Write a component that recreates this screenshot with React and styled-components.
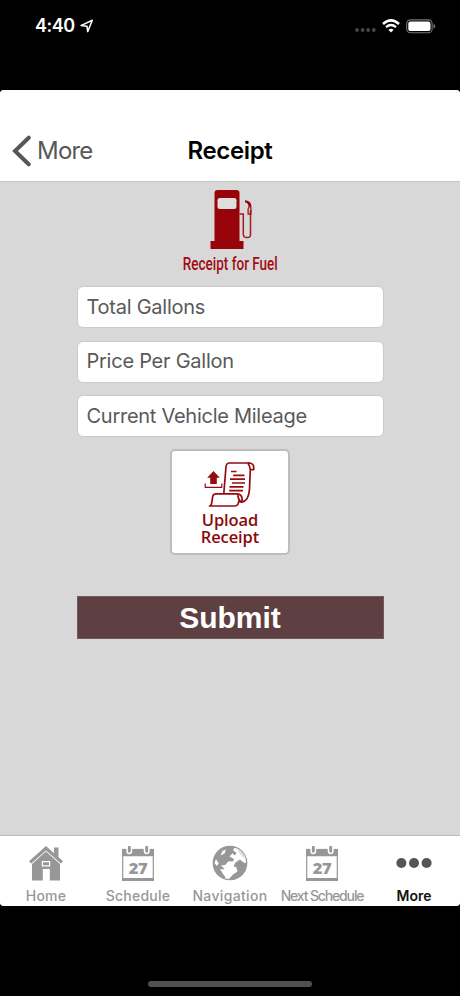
import { useState } from 'react';
import styled, { createGlobalStyle } from 'styled-components';

const GlobalStyle = createGlobalStyle`
    * {
        box-sizing: border-box;
    }
    body {
        margin: 0;
        background: #000;
        font-family: Inter, "Liberation Sans", sans-serif;
    }
`

const Phone = styled.div`
    display: flex;
    flex-direction: column;
    width: 460px;
    height: 996px;
    background: #000;
    overflow: hidden;
`

const StatusBar = styled.header`
    display: flex;
    justify-content: space-between;
    align-items: flex-start;
    height: 90px;
    padding: 15px 24px 0 35px;
    color: #fff;
`

const StatusGroup = styled.div`
    display: flex;
    align-items: center;
    height: 22px;
    gap: ${({ $gap }) => $gap}px;
`

const Time = styled.span`
    font-size: 18px;
    font-weight: 600;
    line-height: 22px;
    letter-spacing: -0.45px;
`

const Screen = styled.main`
    display: flex;
    flex-direction: column;
    height: 816px;
    background: #d8d8d8;
    border-radius: 4px;
    overflow: hidden;
`

const NavBar = styled.nav`
    display: grid;
    grid-template-columns: 1fr auto 1fr;
    align-items: center;
    height: 92px;
    padding: 30px 12px 0;
    background: #fff;
    border-bottom: 1px solid #c4c4c4;
`

const BackButton = styled.button`
    display: flex;
    align-items: center;
    gap: 6px;
    padding: 0;
    border: none;
    background: none;
    color: #575757;
    font-family: inherit;
    font-size: 24px;
    line-height: 30px;
    letter-spacing: -0.8px;
`

const Title = styled.h1`
    margin: 0;
    font-size: 24px;
    font-weight: 600;
    line-height: 30px;
    letter-spacing: -0.35px;
`

const Content = styled.form`
    flex: 1;
    display: flex;
    flex-direction: column;
    align-items: center;
    padding-top: 8px;
`

const FuelCaption = styled.h2`
    height: 20px;
    margin: 4px 0 12px;
    color: #a00d12;
    font-family: Roboto, sans-serif;
    font-size: 18px;
    font-weight: 500;
    line-height: 20px;
    white-space: nowrap;
    transform: scaleX(0.75);
`

const Fields = styled.div`
    display: flex;
    flex-direction: column;
    gap: 12.5px;
    width: 307px;
`

const Field = styled.input`
    width: 100%;
    height: 42px;
    padding: 0 9px 1px;
    border: 1px solid #cacaca;
    border-radius: 6px;
    background: #fff;
    outline: none;
    font-family: inherit;
    font-size: 20px;
    letter-spacing: ${({ $spacing }) => $spacing}px;

    &::placeholder {
        color: #595959;
        opacity: 1;
    }
`

const UploadButton = styled.button`
    display: flex;
    flex-direction: column;
    align-items: center;
    width: 120px;
    height: 106px;
    margin-top: 12px;
    padding: 11px 0 0;
    border: 2px solid #bdbdbd;
    border-radius: 5px;
    background: #fff;
    color: #8c080c;
`

const UploadLabel = styled.span`
    font-family: "Open Sans", "Noto Sans", sans-serif;
    font-size: 16.5px;
    font-weight: 600;
    line-height: 17px;
    letter-spacing: -0.1px;
    text-align: center;
`

const SubmitButton = styled.button`
    width: 307px;
    height: 43px;
    margin-top: 41px;
    padding: 0;
    border: 1px solid #73595b;
    background: #5f4042;
    color: #fff;
    font-family: "Liberation Sans", Arial, sans-serif;
    font-size: 30px;
    font-weight: 700;
    line-height: 40px;
`

const TabBar = styled.nav`
    display: grid;
    grid-template-columns: repeat(5, 1fr);
    height: 71px;
    background: #fff;
    border-top: 1px solid #bcbcbc;
`

const Tab = styled.button`
    display: flex;
    flex-direction: column;
    align-items: center;
    min-width: 0;
    padding: 9px 0 0;
    border: none;
    background: none;
    color: ${({ $active }) => ($active ? '#111' : '#979797')};
    font-family: inherit;
    font-size: 14px;
    font-weight: ${({ $active }) => ($active ? 600 : 500)};
    line-height: 18px;
    letter-spacing: ${({ $spacing }) => $spacing}px;
    white-space: nowrap;
`

const TabIcon = styled.span`
    display: flex;
    align-items: center;
    height: 36px;
    margin-bottom: 6px;
`

const HomeArea = styled.footer`
    flex: 1;
    display: flex;
    justify-content: center;
    align-items: flex-end;
    padding-bottom: 9px;
`

const HomeIndicator = styled.div`
    width: 164px;
    height: 6px;
    border-radius: 3px;
    background: #505050;
`

const LocationIcon = () => (
    <svg width="14" height="14" viewBox="0 0 14 14">
        <path d="M1 6.6 12.3 1.2 7.7 12.6 7 7.2Z" fill="none" stroke="#fff" strokeWidth="1.5" strokeLinejoin="round" />
    </svg>
)

const SignalDots = () => (
    <svg width="22" height="22" viewBox="0 0 22 22" fill="#464646">
        {[3, 8.6, 14.2, 19.8].map(x => (
            <circle key={x} cx={x} cy="15" r="1.9" />
        ))}
    </svg>
)

const WifiIcon = () => (
    <svg width="18" height="14" viewBox="0 0 18 14" fill="none" stroke="#fff">
        <path d="M1 4.9Q9-2.1 17 4.9" strokeWidth="2.6" />
        <path d="M4 8.2Q9 4 14 8.2" strokeWidth="2.4" />
        <path d="M6.4 10.8Q9 8.7 11.6 10.8L9 13.5Z" fill="#fff" stroke="none" />
    </svg>
)

const BatteryIcon = () => (
    <svg width="30" height="15" viewBox="0 0 30 15">
        <rect x="0.7" y="0.9" width="25.4" height="12.8" rx="3.8" fill="none" stroke="#777" strokeWidth="1.1" />
        <rect x="2.3" y="2.5" width="22.2" height="9.6" rx="2.2" fill="#fff" />
        <path d="M27.5 5Q29.2 5.5 29.2 7.3T27.5 9.6Z" fill="#777" />
    </svg>
)

const BackIcon = () => (
    <svg width="19" height="32" viewBox="0 0 19 32">
        <path d="M16.7 2.7 3 16 16.7 29.3" fill="none" stroke="#575757" strokeWidth="4" strokeLinecap="round" />
    </svg>
)

const FuelPumpIcon = () => (
    <svg width="44" height="60" viewBox="-2.5 0 44 60">
        <path d="M7 0H26Q29 0 29 3V51H33V59H0V51H4V3Q4 0 7 0Z" fill="#960308" />
        <rect x="7" y="8" width="19" height="11" rx="2.3" fill="#dedede" />
        <path d="M29 24H32.8V44Q32.8 47.6 36.5 47.6T40 44V20" fill="none" stroke="#a51a1e" strokeWidth="1.5" />
        <path d="M35.2 11.5 38.8 13Q40.5 15.2 40.5 20V24H37.6V19L39 16" fill="none" stroke="#a51a1e" strokeWidth="1.3" />
        <path d="M34.5 10.3Q40 10.7 40.8 15.5L38.4 17.3Q37.8 13 34.5 12.3Z" fill="#960308" />
    </svg>
)

const UploadIcon = () => (
    <svg width="52" height="49" viewBox="0 0 52 49" fill="none" stroke="#960b10" strokeWidth="1.7" strokeLinejoin="round">
        <path d="M9.5 9 15.8 15.7H12.8V22H6.2V15.7H3.2Z" fill="#960b10" stroke="none" />
        <path d="M1.2 21.5V25.3H17.8V21.5" strokeWidth="1.2" />
        <path d="M46 1H25Q22.2 1.2 21.9 5.7L19.8 31.7" />
        <path d="M44.5 1Q50.5 0.7 49.7 7.7H46.3Q45.8 3.2 43.8 1.2M46.3 7.7 45.5 27.2Q44.7 39.2 37.5 40.2" />
        <path d="M34 31.8H12Q8.3 32.2 8.5 36.2L8 39.2Q7.5 44 5.5 44H31.5Q34.5 43.2 34.7 39.2L37.5 40.2Q33.5 37.7 34 31.8Z" />
        <path d="M34.7 32.2Q38.8 33.2 38 40.2" />
        <path d="M27 9.5H32.5M29.2 13.3H40.5M26 17.2H41M28 21H41M25.5 24.9H39.5M25.2 28.6H39" strokeWidth="1.7" />
    </svg>
)

const HouseIcon = () => (
    <svg width="34" height="35" viewBox="0 0 34 35" fill="#979797">
        <path d="M25 1.5H29.5V12L25 8Z" />
        <path d="M17 0 34 15.3 31.8 17.6 17 4.5 2.2 17.6 0 15.3Z" />
        <path d="M17 5.6 31 18V34.5H20.8V23H13.8V34.5H3V18Z" />
        <path d="M12.8 15H21.2V20.6H12.8Z" fill="#fff" />
        <path d="M14 16.2H20V19.3H14Z" />
    </svg>
)

const CalendarIcon = () => (
    <svg width="32" height="35" viewBox="0 0 32 35">
        <rect x="0.7" y="3.5" width="30.6" height="30.8" fill="#fff" stroke="#979797" strokeWidth="1.2" />
        <path d="M0 3H32V10.3H0ZM0 32H32V35H0Z" fill="#979797" />
        {[7.3, 24.7].map(x => (
            <rect key={x} x={x - 2.2} y="-1" width="4.4" height="8.5" rx="2.2" fill="#979797" stroke="#fff" strokeWidth="1.5" />
        ))}
        <text x="16" y="27.6" textAnchor="middle" fill="#979797" fontFamily="Open Sans" fontSize="16.5" fontWeight="800" letterSpacing="-0.5">27</text>
    </svg>
)

const GlobeIcon = () => (
    <svg width="36" height="36" viewBox="0 0 36 36">
        <circle cx="18" cy="18" r="16.7" fill="#fff" stroke="#979797" strokeWidth="1.3" />
        <g fill="#979797">
            <path d="M12 2.5Q17 0 23 2.2L21 5 24.5 8 23 10.5 20.5 8.3 17.5 11.5 22 14 21 16.5 16.5 16.3 13.2 20 9 20.5 12.5 24 9.5 26.5 13.5 31.5 12 34Q2 29.7 1 19 1 9 12 2.5Z" />
            <path d="M8 24 12.5 24.5 20.5 25.5 24 28 18 34 12.5 31Z" fill="#fff" />
            <path d="M23.5 17.5 28 14.5 31.5 17.5 34.5 18Q34 27.5 27 32.5 22 35.5 16.5 34.5L21 29.5 25.5 26.5 24.2 22 21.5 21.5Z" />
            <path d="M25 3.2Q31.5 6.5 34 13L31 12.5 27 7.5Z" fill="#dedede" />
            <path d="M10.5 6 14 4.5 12.5 8.5 8.5 10.5ZM4 14 6.8 18.5 4.8 21 2.5 18Z" fill="#fff" />
        </g>
    </svg>
)

const DotsIcon = () => (
    <svg width="36" height="12" viewBox="0 0 36 12" fill="#555">
        {[5.4, 18, 30.6].map(x => (
            <circle key={x} cx={x} cy="6" r="5" />
        ))}
    </svg>
)

const fields = [
    { name: 'gallons', label: 'Total Gallons', spacing: -0.25 },
    { name: 'price', label: 'Price Per Gallon', spacing: -0.25 },
    { name: 'mileage', label: 'Current Vehicle Mileage', spacing: -0.27 }
]

const tabs = [
    { label: 'Home', icon: <HouseIcon />, spacing: 0.2 },
    { label: 'Schedule', icon: <CalendarIcon />, spacing: 0.25 },
    { label: 'Navigation', icon: <GlobeIcon />, spacing: 0.35 },
    { label: 'Next Schedule', icon: <CalendarIcon />, spacing: -1.15 },
    { label: 'More', icon: <DotsIcon />, spacing: 0 }
]

const App = () => {
    const [formData, setFormData] = useState({ gallons: '', price: '', mileage: '' })
    const [activeTab, setActiveTab] = useState('More')

    const handleChange = (e) => {
        setFormData({ ...formData, [e.target.name]: e.target.value })
    }

    return (
        <Phone>
            <GlobalStyle />
            <StatusBar>
                <StatusGroup $gap={5}>
                    <Time>4:40</Time>
                    <LocationIcon />
                </StatusGroup>
                <StatusGroup $gap={6}>
                    <SignalDots />
                    <WifiIcon />
                    <BatteryIcon />
                </StatusGroup>
            </StatusBar>
            <Screen>
                <NavBar>
                    <BackButton type="button">
                        <BackIcon />
                        More
                    </BackButton>
                    <Title>Receipt</Title>
                </NavBar>
                <Content onSubmit={(e) => e.preventDefault()}>
                    <FuelPumpIcon />
                    <FuelCaption>Receipt for Fuel</FuelCaption>
                    <Fields>
                        {fields.map(field => (
                            <Field
                                key={field.name}
                                name={field.name}
                                placeholder={field.label}
                                value={formData[field.name]}
                                onChange={handleChange}
                                $spacing={field.spacing}
                            />
                        ))}
                    </Fields>
                    <UploadButton type="button">
                        <UploadIcon />
                        <UploadLabel>Upload<br />Receipt</UploadLabel>
                    </UploadButton>
                    <SubmitButton type="submit">Submit</SubmitButton>
                </Content>
                <TabBar>
                    {tabs.map(tab => (
                        <Tab
                            key={tab.label}
                            type="button"
                            $active={tab.label === activeTab}
                            $spacing={tab.spacing}
                            onClick={() => setActiveTab(tab.label)}
                        >
                            <TabIcon>{tab.icon}</TabIcon>
                            {tab.label}
                        </Tab>
                    ))}
                </TabBar>
            </Screen>
            <HomeArea>
                <HomeIndicator />
            </HomeArea>
        </Phone>
    )
}

export default App;
